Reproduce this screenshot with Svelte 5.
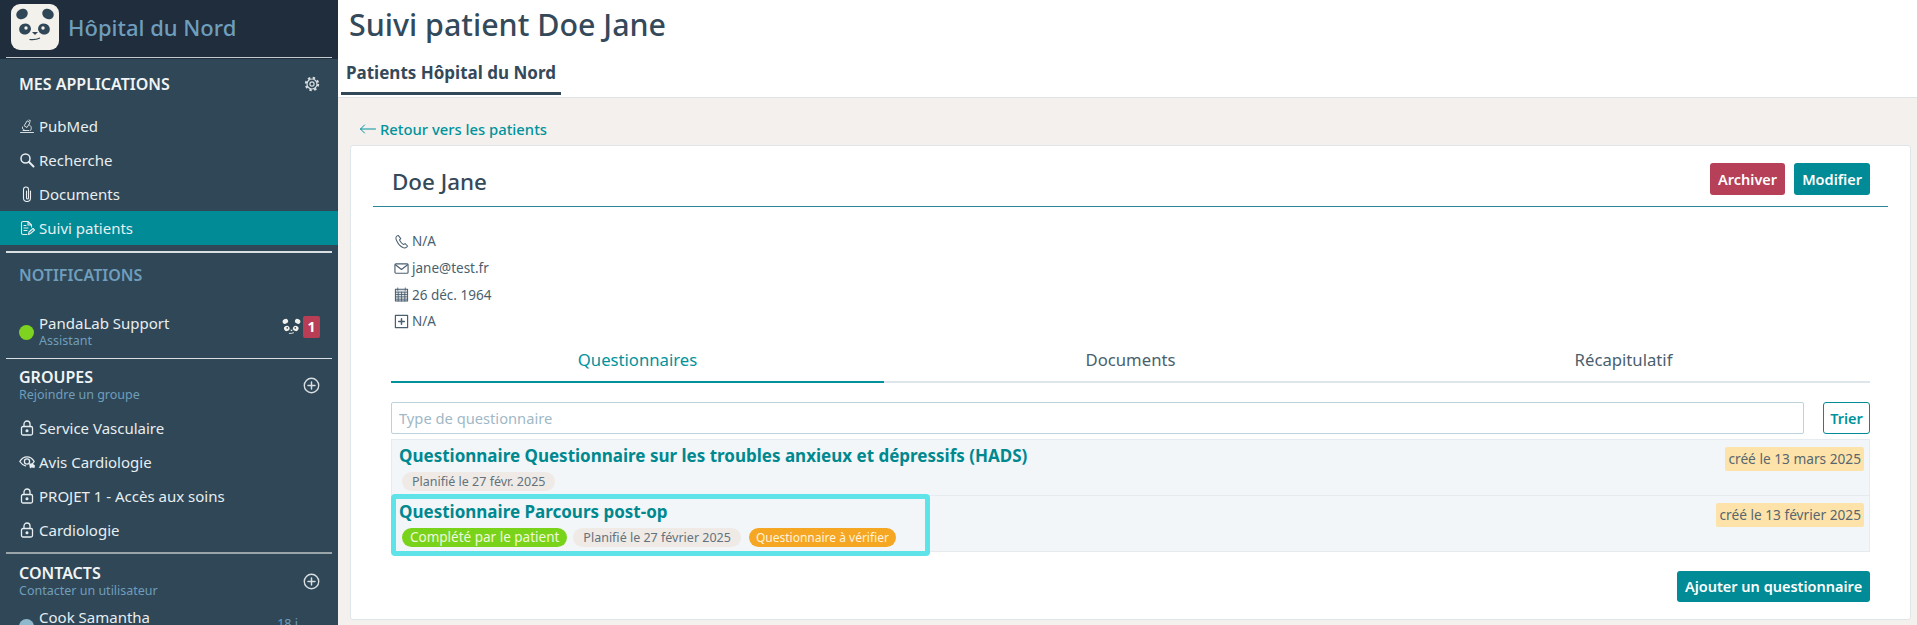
<script>
	const apps = [
		{ label: 'PubMed', icon: 'microscope' },
		{ label: 'Recherche', icon: 'search' },
		{ label: 'Documents', icon: 'clip' },
		{ label: 'Suivi patients', icon: 'file', active: true }
	];

	const groups = [
		{ label: 'Service Vasculaire', icon: 'lock' },
		{ label: 'Avis Cardiologie', icon: 'eye' },
		{ label: 'PROJET 1 - Accès aux soins', icon: 'lock' },
		{ label: 'Cardiologie', icon: 'lock' }
	];

	const details = [
		{ icon: 'phone', text: 'N/A' },
		{ icon: 'mail', text: 'jane@test.fr' },
		{ icon: 'calendar', text: '26 déc. 1964' },
		{ icon: 'plus', text: 'N/A' }
	];

	const tabs = ['Questionnaires', 'Documents', 'Récapitulatif'];
</script>

{#snippet icon(name)}
	<svg class="icon" viewBox="0 0 16 16" fill="none" stroke="currentColor" stroke-width="1.1" stroke-linecap="round" stroke-linejoin="round">
		{#if name === 'microscope'}
			<path d="M1.5 14.5h13M4 12.500h6M8.500 3l2.500 1.500-3 5L5.500 8zM10 2l1.700 1M6 12.500c-2-.5-3-2-2.500-3.500M10.500 7c2 1 2.500 3.500 1 5.500" stroke-width=".9" />
		{:else if name === 'search'}
			<circle cx="6.500" cy="6.500" r="4.500" stroke-width="1.500" />
			<path d="M10 10l4.500 4.500" stroke-width="2" />
		{:else if name === 'clip'}
			<path d="M11.500 5v7a3.500 3.500 0 0 1-7 0V3.500a2.500 2.500 0 0 1 5 0V12a1 1 0 0 1-2 0V5" />
		{:else if name === 'file'}
			<path d="M8 14.500H4a1.500 1.500 0 0 1-1.500-1.500V3A1.500 1.500 0 0 1 4 1.500h5L12.500 5v2M9 1.500V5h3.500M5 8h4M5 10.500h3M5 5.500h2M9.500 14.500l.5-2.500 4-3.500 1.500 1.500-4 3.500z" />
		{:else if name === 'lock'}
			<rect x="2.500" y="6.500" width="11" height="8.500" rx="1.500" stroke-width="1.300" />
			<path d="M5 6.500V4a3 3 0 0 1 6 0v2.500" stroke-width="1.300" />
			<circle cx="8" cy="10.700" r="1" fill="currentColor" />
		{:else if name === 'eye'}
			<path d="M.8 7.500C3 3.800 5.500 2.800 8 2.800s5 1 7.200 4.700c-1 1.500-2 2.500-3 3.200M6.500 11.800C4.300 11.400 2.500 10 .8 7.500" stroke-width="1.300" />
			<circle cx="8" cy="7.500" r="2.600" stroke-width="1.300" />
			<path d="M10 9.500l1 5 1.500-1 3 .5.500-2.500-2.500-2z" fill="currentColor" stroke="none" />
		{:else if name === 'phone'}
			<path d="M4.500 1.500L3 2.300C1.800 3 1.800 5 3 7.500c1.300 2.700 3.800 5.800 6.500 7 1.700.7 3 .3 4-.5l1-1.200-2.700-2.600-1.600 1c-1.200-.3-3.700-3-4.300-5l1.300-1.300z" />
		{:else if name === 'mail'}
			<rect x="1" y="3" width="14" height="10" rx="1" stroke-width="1.200" />
			<path d="M1.500 4l6.500 5 6.500-5" stroke-width="1.200" />
		{:else if name === 'calendar'}
			<rect x="1.500" y="2.500" width="13" height="12.500" fill="#dbe1e5" />
			<path d="M1.500 5.500h13M1.500 8h13M1.500 10.500h13M1.500 13h13M4.500 5.500V15M8 5.500V15M11.500 5.500V15M4 1v2.500M12 1v2.500" stroke-width=".9" />
		{:else if name === 'plus'}
			<rect x="1.500" y="1.500" width="13" height="13" stroke-width="1.300" />
			<path d="M8 5v6M5 8h6" stroke-width="1.600" />
		{:else if name === 'gear'}
			<circle cx="8" cy="8" r="2.100" stroke-width="1.200" />
			<circle cx="8" cy="8" r="5" stroke-width="1.200" />
			<circle cx="8" cy="8" r="6.200" stroke-width="2" stroke-dasharray="2.400 2.470" stroke-linecap="butt" />
		{:else if name === 'add'}
			<circle cx="8" cy="8" r="6.800" stroke-width="1.300" />
			<path d="M8 4.700v6.600M4.700 8h6.600" stroke-width="1.400" />
		{/if}
	</svg>
{/snippet}

{#snippet panda(cls, box)}
	<svg class={cls} viewBox={box}>
		<ellipse cx="11" cy="10" rx="6" ry="5" transform="rotate(-30 11 10)" />
		<ellipse cx="37" cy="10" rx="6" ry="5" transform="rotate(30 37 10)" />
		<ellipse cx="14" cy="25" rx="6" ry="5.500" transform="rotate(-25 14 25)" />
		<ellipse cx="33" cy="25" rx="6" ry="5.500" transform="rotate(25 33 25)" />
		<path d="M21 28h6l-3 3z" />
		<path d="M18.500 35.500c4 .5 7.500 0 10.500-1.500" fill="none" class="mouth" />
		<circle cx="15" cy="24" r="1.700" class="eye" />
		<circle cx="32" cy="24" r="1.700" class="eye" />
	</svg>
{/snippet}

<div class="app">
	<aside class="sidebar">
		<div class="brand">
			<div class="brand-inner">
				<div class="logo">{@render panda('logo-panda', '0 0 48 46')}</div>
				<span class="brand-name">Hôpital du Nord</span>
			</div>
		</div>

		<div class="section-head apps-head">
			<span class="section-title">MES APPLICATIONS</span>
			<span class="head-icon gear">{@render icon('gear')}</span>
		</div>
		<nav>
			{#each apps as app}
				<div class="nav-item" class:active={app.active}>
					{@render icon(app.icon)}
					<span>{app.label}</span>
				</div>
			{/each}
		</nav>
		<div class="rule first-rule"></div>

		<div class="notif-title">NOTIFICATIONS</div>
		<div class="person support">
			<span class="dot online"></span>
			<div class="person-text">
				<div class="person-name">PandaLab Support</div>
				<div class="person-role">Assistant</div>
			</div>
			<div class="unread">
				{@render panda('mini-panda', '4 3 40 36')}
				<span class="count">1</span>
			</div>
		</div>
		<div class="rule"></div>

		<div class="section-head sub-head">
			<div>
				<div class="section-title">GROUPES</div>
				<div class="section-sub">Rejoindre un groupe</div>
			</div>
			<span class="head-icon add">{@render icon('add')}</span>
		</div>
		<nav>
			{#each groups as group}
				<div class="nav-item">
					{@render icon(group.icon)}
					<span>{group.label}</span>
				</div>
			{/each}
		</nav>
		<div class="rule grey-rule"></div>

		<div class="section-head sub-head contacts-head">
			<div>
				<div class="section-title">CONTACTS</div>
				<div class="section-sub">Contacter un utilisateur</div>
			</div>
			<span class="head-icon add">{@render icon('add')}</span>
		</div>
		<div class="person contact">
			<span class="dot away"></span>
			<div class="person-text">
				<div class="person-name">Cook Samantha</div>
			</div>
			<span class="last-seen">18 j</span>
		</div>
	</aside>

	<main class="main">
		<header class="top">
			<h1>Suivi patient Doe Jane</h1>
			<div class="top-tab">Patients Hôpital du Nord</div>
		</header>

		<div class="content">
			<div class="back">
				<svg viewBox="0 0 16 10" fill="none" stroke="currentColor" stroke-width="1" stroke-linecap="round" stroke-linejoin="round">
					<path d="M.5 5h15M4.500 1L.5 5l4 4" />
				</svg>
				<span>Retour vers les patients</span>
			</div>

			<section class="card">
				<div class="card-head">
					<h2>Doe Jane</h2>
					<div class="actions">
						<button class="btn danger">Archiver</button>
						<button class="btn primary">Modifier</button>
					</div>
				</div>

				<div class="card-body">
					<ul class="details">
						{#each details as item}
							<li>
								{@render icon(item.icon)}
								<span>{item.text}</span>
							</li>
						{/each}
					</ul>

					<div class="tabs">
						{#each tabs as tab, i}
							<div class="tab" class:selected={i === 0}>{tab}</div>
						{/each}
					</div>

					<div class="filter">
						<input type="text" placeholder="Type de questionnaire" />
						<button class="btn outline">Trier</button>
					</div>

					<div class="row">
						<div class="row-main">
							<div class="row-title">Questionnaire Questionnaire sur les troubles anxieux et dépressifs (HADS)</div>
							<div class="pills">
								<span class="pill grey">Planifié le 27 févr. 2025</span>
							</div>
						</div>
						<span class="created">créé le 13 mars 2025</span>
					</div>
					<div class="row">
						<div class="row-main">
							<div class="row-title">Questionnaire Parcours post-op</div>
							<div class="pills">
								<span class="pill green">Complété par le patient</span>
								<span class="pill grey">Planifié le 27 février 2025</span>
								<span class="pill orange">Questionnaire à vérifier</span>
							</div>
						</div>
						<span class="created">créé le 13 février 2025</span>
						<div class="highlight"></div>
					</div>

					<div class="card-foot">
						<button class="btn primary add-btn">Ajouter un questionnaire</button>
					</div>
				</div>
			</section>
		</div>
	</main>
</div>

<style>
	:global(body) {
		margin: 0;
		font-family: 'Noto Sans', sans-serif;
		color: #34495a;
	}

	.app {
		display: flex;
		width: 1917px;
		height: 625px;
		overflow: hidden;
	}

	.icon {
		width: 16px;
		height: 16px;
		flex: none;
	}

	/* sidebar */
	.sidebar {
		width: 338px;
		flex: none;
		height: 625px;
		overflow: hidden;
		background: #2f4756;
		color: #e8eef1;
	}

	.brand {
		background: #1f2d3c;
		height: 59px;
		padding: 0 6px;
		box-sizing: border-box;
	}

	.brand-inner {
		display: flex;
		align-items: center;
		gap: 9px;
		height: 58px;
		padding: 0 0 4px 5px;
		box-sizing: border-box;
		border-bottom: 1.500px solid #c4cace;
	}

	.logo {
		width: 48px;
		height: 46px;
		background: #f3f1ec;
		border-radius: 9px;
		flex: none;
	}

	:global(.logo-panda) {
		display: block;
		fill: #2f4756;
	}

	.brand-name {
		font-size: 22px;
		font-weight: 500;
		color: #6f9ebd;
	}

	.section-head {
		display: flex;
		justify-content: space-between;
		align-items: center;
		padding: 0 18px 0 19px;
	}

	.apps-head {
		height: 50px;
	}

	.section-title {
		font-size: 16px;
		font-weight: 600;
		line-height: 20px;
		color: #f1f4f5;
	}

	.section-sub {
		font-size: 12.500px;
		line-height: 16px;
		color: #6f9ebd;
	}

	.head-icon {
		display: flex;
		color: #d8dfe2;
	}

	.add .icon {
		width: 17px;
		height: 17px;
	}

	.nav-item {
		display: flex;
		align-items: center;
		gap: 4px;
		height: 34px;
		padding-left: 19px;
		font-size: 15px;
	}

	.nav-item.active {
		background: #008b96;
	}

	.rule {
		height: 1.500px;
		margin: 0 6px;
		background: #d9dfe2;
	}

	.first-rule {
		margin-top: 6px;
	}

	.grey-rule {
		margin-top: 5px;
		height: 2px;
		background: #9aa5aa;
	}

	.notif-title {
		padding: 11px 19px 0;
		font-size: 16px;
		line-height: 22px;
		font-weight: 600;
		color: #6f9ebd;
	}

	.person {
		display: flex;
		align-items: flex-start;
		padding-left: 19px;
		position: relative;
	}

	.support {
		height: 72px;
		box-sizing: border-box;
		padding-top: 27px;
	}

	.dot {
		width: 15px;
		height: 15px;
		border-radius: 50%;
		flex: none;
		margin: 12px 5px 0 0;
	}

	.online {
		background: #7ed321;
	}

	.away {
		background: #8fb8cc;
	}

	.person-text {
		flex: 1;
	}

	.person-name {
		font-size: 15px;
		line-height: 20px;
	}

	.person-role {
		font-size: 12.500px;
		line-height: 16px;
		color: #6f9ebd;
	}

	.unread {
		display: flex;
		align-items: center;
		gap: 2px;
		margin: 3px 18px 0 0;
	}

	:global(.mini-panda) {
		width: 19px;
		height: 17px;
		fill: #f3f1ec;
	}

	:global(.mini-panda .mouth) {
		stroke: #f3f1ec;
		stroke-width: 2;
	}

	:global(.mini-panda .eye) {
		fill: #2f4756;
	}

	:global(.logo-panda .mouth) {
		stroke: #2f4756;
		stroke-width: 1.200;
	}

	:global(.logo-panda .eye) {
		fill: #f3f1ec;
	}

	.count {
		width: 17px;
		height: 22px;
		line-height: 22px;
		text-align: center;
		background: #b83d55;
		border-radius: 2px;
		color: #fff;
		font-size: 14px;
		font-weight: 700;
	}

	.sub-head {
		padding-top: 8px;
		padding-bottom: 8px;
	}

	.contacts-head {
		padding-top: 9px;
		padding-bottom: 8px;
	}

	.contact .dot {
		margin-top: 12px;
	}

	.last-seen {
		margin: 8px 40px 0 0;
		font-size: 12.500px;
		color: #6f9ebd;
	}

	/* main */
	.main {
		flex: 1;
		display: flex;
		flex-direction: column;
		min-width: 0;
		background: #f4f0ed;
	}

	.top {
		background: #fff;
		height: 98px;
		box-sizing: border-box;
		border-bottom: 1px solid #dfe3e5;
		padding-left: 3px;
	}

	h1 {
		margin: 0;
		padding-left: 8px;
		font-size: 30.400px;
		font-weight: 500;
		line-height: 49px;
		color: #34495a;
	}

	.top-tab {
		display: inline-block;
		height: 43px;
		line-height: 47px;
		padding: 0 5px;
		border-bottom: 3px solid #2f4756;
		font-size: 17px;
		font-weight: 700;
		color: #34495a;
	}

	.content {
		padding: 20px 6px 0 12px;
	}

	.back {
		display: flex;
		align-items: center;
		gap: 4px;
		height: 22px;
		margin: 0 0 5px 10px;
		color: #00939c;
		font-size: 14.800px;
		font-weight: 500;
	}

	.back svg {
		width: 16px;
		height: 10px;
	}

	.card {
		background: #fff;
		border: 1px solid #dfe6e9;
		border-radius: 3px;
		height: 475px;
		box-sizing: border-box;
		padding: 17px 22px 0;
	}

	.card-head {
		display: flex;
		justify-content: space-between;
		align-items: flex-start;
		height: 44px;
		box-sizing: border-box;
		padding: 0 18px 0 19px;
		border-bottom: 1px solid #2a8796;
	}

	h2 {
		margin: 0;
		font-size: 22.400px;
		font-weight: 500;
		line-height: 38px;
		color: #34495a;
	}

	.actions {
		display: flex;
		gap: 9px;
	}

	.btn {
		height: 32px;
		padding: 0 8px;
		border: none;
		border-radius: 3px;
		font-family: inherit;
		font-size: 14.500px;
		font-weight: 600;
		color: #fff;
	}

	.danger {
		background: #b54057;
	}

	.primary {
		background: #008b96;
	}

	.outline {
		width: 47px;
		padding: 0;
		background: #fff;
		border: 1px solid #008b96;
		color: #00939c;
	}

	.card-body {
		padding: 0 18px 0 18px;
	}

	.details {
		list-style: none;
		margin: 0;
		padding: 21px 0 0 3px;
	}

	.details li {
		display: flex;
		align-items: center;
		gap: 3px;
		height: 26.700px;
		font-size: 13.500px;
		color: #4a5f6e;
	}

	.details .icon {
		width: 15px;
		height: 15px;
	}

	.tabs {
		display: flex;
		margin-top: 4px;
	}

	.tab {
		flex: 1;
		height: 44px;
		box-sizing: border-box;
		line-height: 42px;
		text-align: center;
		font-size: 16.700px;
		color: #4a5f6e;
		border-bottom: 2px solid #dde6ea;
	}

	.tab.selected {
		color: #00939c;
		border-bottom-color: #00939c;
	}

	.filter {
		display: flex;
		gap: 19px;
		margin-top: 19px;
		margin-bottom: 5px;
	}

	input {
		flex: 1;
		height: 32px;
		box-sizing: border-box;
		padding: 0 7px;
		border: 1px solid #bcd2dd;
		border-radius: 2px;
		font-family: inherit;
		font-size: 14.700px;
		color: #34495a;
		outline: none;
	}

	input::placeholder {
		color: #9fb8c6;
		opacity: 1;
	}

	.row {
		position: relative;
		display: flex;
		justify-content: space-between;
		align-items: flex-start;
		height: 57px;
		box-sizing: border-box;
		padding: 5px 5px 0 7px;
		background: #f2f6f9;
		border: 1px solid #e5ebef;
		margin-bottom: -1px;
	}

	.row-title {
		font-size: 17px;
		font-weight: 700;
		line-height: 22px;
		color: #00888f;
	}

	.pills {
		display: flex;
		gap: 6px;
		margin: 5px 0 0 3px;
	}

	.pill {
		height: 19px;
		line-height: 19px;
		padding: 0 10px;
		border-radius: 10px;
		font-size: 12.500px;
		white-space: nowrap;
	}

	.grey {
		background: #efeae6;
		color: #63727d;
	}

	.green {
		background: #79d31a;
		color: #eef9dd;
		font-size: 13.500px;
		padding: 0 8px;
	}

	.orange {
		background: #f5a623;
		color: #fff3dd;
		font-size: 12px;
		padding: 0 7px;
		margin-left: 2px;
	}

	.created {
		height: 24px;
		line-height: 24px;
		margin-top: 2px;
		padding: 0 3px;
		background: #fde3a9;
		border-radius: 2px;
		font-size: 13.700px;
		color: #57666f;
	}

	.highlight {
		position: absolute;
		left: -1px;
		top: -2px;
		width: 539px;
		height: 62px;
		box-sizing: border-box;
		border: 5px solid #5ee3e8;
		border-radius: 4px;
	}

	.card-foot {
		display: flex;
		justify-content: flex-end;
		margin-top: 20px;
	}

	.add-btn {
		width: 193px;
		height: 31px;
		padding: 0;
	}
</style>
